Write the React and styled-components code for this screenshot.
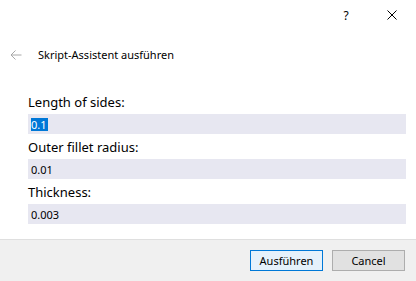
import React from 'react';
import styled, { createGlobalStyle } from 'styled-components';

const Global = createGlobalStyle`
  html, body {
    margin: 0;
    padding: 0;
    background: #fff;
  }
  * { box-sizing: border-box; }
`;

const Window = styled.div`
  width: 416px;
  height: 281px;
  display: flex;
  flex-direction: column;
  background: #fff;
  font-family: "Segoe UI", "Noto Sans", sans-serif;
  font-size: 11px;
  color: #000;
  overflow: hidden;
`;

const TitleBar = styled.div`
  height: 30px;
  display: flex;
  justify-content: flex-end;
  padding-right: 1px;
`;

const CaptionButton = styled.div`
  width: 46px;
  height: 30px;
  display: flex;
  align-items: center;
  justify-content: center;
  font-size: 12px;
`;

const Header = styled.div`
  height: 59px;
  display: flex;
  align-items: center;
  padding: 0 0 10px 10px;
  gap: 16px;
`;

const Form = styled.div`
  flex: 1;
  padding: 0 10px 0 28px;
`;

const Label = styled.div`
  height: 25px;
  display: flex;
  align-items: flex-end;
  padding-bottom: 5px;
  font-size: 13px;
  line-height: 14px;
`;

const Field = styled.div`
  height: 20px;
  background: #e7e7f1;
  display: flex;
  align-items: center;
  padding-left: 3px;
`;

const Selected = styled.span`
  background: #0078d7;
  color: #fff;
  line-height: 13px;
  padding: 0 1px 0 0;
`;

const Footer = styled.div`
  height: 42px;
  background: #f0f0f0;
  border-top: 1px solid #dfdfdf;
  display: flex;
  justify-content: flex-end;
  align-items: center;
  gap: 9px;
  padding: 0 11px 1px 0;
`;

const Button = styled.div`
  width: 73px;
  height: 21px;
  display: flex;
  align-items: center;
  justify-content: center;
  border: 1px solid ${p => (p.$primary ? '#0078d7' : '#adadad')};
  background: ${p => (p.$primary ? '#e5f1fb' : '#e1e1e1')};
`;

const fields = [
  { label: 'Length of sides:', value: '0.1', selected: true },
  { label: 'Outer fillet radius:', value: '0.01' },
  { label: 'Thickness:', value: '0.003' },
];

export default function App() {
  return (
    <>
      <Global />
      <Window>
        <TitleBar>
          <CaptionButton>?</CaptionButton>
          <CaptionButton>
            <svg width="10" height="10" viewBox="0 0 10 10">
              <path d="M0.5 0.5 L9.5 9.5 M9.5 0.5 L0.5 9.5" stroke="#000" strokeWidth="1" fill="none" />
            </svg>
          </CaptionButton>
        </TitleBar>
        <Header>
          <svg width="12" height="10" viewBox="0 0 12 10">
            <path d="M11.5 5 H1 M5.5 0.5 L1 5 L5.5 9.5" stroke="#a8a8a8" strokeWidth="1" fill="none" />
          </svg>
          <span>Skript-Assistent ausführen</span>
        </Header>
        <Form>
          {fields.map(f => (
            <React.Fragment key={f.label}>
              <Label>{f.label}</Label>
              <Field>{f.selected ? <Selected>{f.value}</Selected> : f.value}</Field>
            </React.Fragment>
          ))}
        </Form>
        <Footer>
          <Button $primary>Ausführen</Button>
          <Button>Cancel</Button>
        </Footer>
      </Window>
    </>
  );
}
